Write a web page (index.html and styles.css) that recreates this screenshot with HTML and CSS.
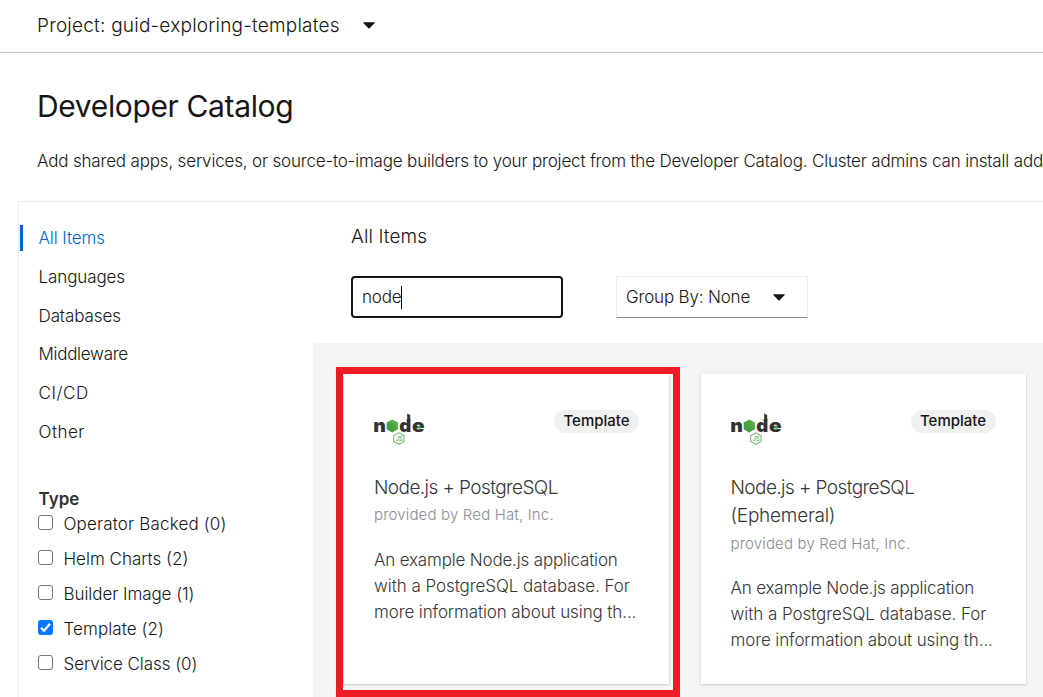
FILE: index.html
```html
<!DOCTYPE html>
<html lang="en">
<head>
<meta charset="utf-8">
<title>Developer Catalog</title>
<link rel="stylesheet" href="styles.css">
</head>
<body>
<svg class="defs" width="0" height="0">
  <defs>
    <linearGradient id="leaf" x1="0" y1="1" x2="1" y2="0"><stop offset="0" stop-color="#3b943a"/><stop offset="1" stop-color="#5cb54d"/></linearGradient>
    <symbol id="node-logo" viewBox="0 0 52 32">
      <text class="logo-letter" x="-.8" y="18.7" textLength="12.6" lengthAdjust="spacingAndGlyphs">n</text>
      <path d="M18.3 6.4l5.6 3.2v6.6l-5.6 3.2-5.6-3.2v-6.6z" fill="url(#leaf)"/>
      <text class="logo-letter" x="25.2" y="18.7" textLength="12" lengthAdjust="spacingAndGlyphs">d</text>
      <path d="M33.2 .4l3 1.7v6h-3z" fill="#333"/>
      <text class="logo-letter" x="37.9" y="18.7" textLength="12.6" lengthAdjust="spacingAndGlyphs">e</text>
      <path d="M45 12.3l1.6.9v1.8l-1.6.9-1.6-.9v-1.8z" fill="#4fa84a"/>
      <path d="M24.9 19.8l5.2 2.9v5.7l-5.2 2.9-5.2-2.9v-5.7z" fill="#fff" stroke="#77b871" stroke-width="1.1"/>
      <text class="logo-js" x="21.4" y="28.4">JS</text>
    </symbol>
  </defs>
</svg>
<header class="project-bar">
  <span class="project-name">Project: guid-exploring-templates</span>
  <svg class="caret" width="12" height="7" viewBox="0 0 12 7"><path d="M.3.3h11.4v.8L6.6 6.3q-.6.6-1.2 0L.3 1.1z"/></svg>
</header>
<section class="intro">
  <h1 class="page-title">Developer Catalog</h1>
  <p class="lead">Add shared apps, services, or source-to-image builders to your project from the Developer Catalog. Cluster admins can install add</p>
</section>
<main class="catalog">
  <aside class="sidebar">
    <nav class="tabs">
      <a class="tab active"><span class="t-all">All Items</span></a>
      <a class="tab"><span class="t-lang">Languages</span></a>
      <a class="tab"><span class="t-data">Databases</span></a>
      <a class="tab"><span class="t-mid">Middleware</span></a>
      <a class="tab"><span class="t-ci">CI/CD</span></a>
      <a class="tab"><span class="t-other">Other</span></a>
    </nav>
    <h2 class="filter-title">Type</h2>
    <div class="filters">
      <label class="filter"><span class="box"></span><span class="f-op">Operator Backed (0)</span></label>
      <label class="filter"><span class="box"></span><span class="f-helm">Helm Charts (2)</span></label>
      <label class="filter"><span class="box"></span><span class="f-build">Builder Image (1)</span></label>
      <label class="filter"><span class="box checked"><svg width="15" height="15" viewBox="0 0 15 15"><path d="M3 7.8l3 3 6-7" fill="none" stroke="#fff" stroke-width="2.2"/></svg></span><span class="f-temp">Template (2)</span></label>
      <label class="filter"><span class="box"></span><span class="f-svc">Service Class (0)</span></label>
    </div>
  </aside>
  <section class="content">
    <h2 class="content-title">All Items</h2>
    <div class="toolbar">
      <div class="search"><span class="search-text">node</span><span class="cursor"></span></div>
      <div class="group"><span class="group-text">Group By: None</span>
        <svg class="caret" width="12" height="7" viewBox="0 0 12 7"><path d="M.3.3h11.4v.8L6.6 6.3q-.6.6-1.2 0L.3 1.1z"/></svg></div>
    </div>
    <div class="grid">
      <article class="card highlighted">
        <div class="card-head"><svg class="logo" width="52" height="32"><use href="#node-logo"/></svg><span class="badge">Template</span></div>
        <h3 class="card-title"><span class="c-title">Node.js + PostgreSQL</span></h3>
        <p class="provider">provided by Red Hat, Inc.</p>
        <p class="desc"><span class="d1">An example Node.js application</span><br><span class="d2">with a PostgreSQL database. For</span><br><span class="d3">more information about using th...</span></p>
      </article>
      <article class="card">
        <div class="card-head"><svg class="logo" width="52" height="32"><use href="#node-logo"/></svg><span class="badge">Template</span></div>
        <h3 class="card-title"><span class="c-title">Node.js + PostgreSQL</span><br><span class="c-eph">(Ephemeral)</span></h3>
        <p class="provider">provided by Red Hat, Inc.</p>
        <p class="desc"><span class="d1">An example Node.js application</span><br><span class="d2">with a PostgreSQL database. For</span><br><span class="d3">more information about using th...</span></p>
      </article>
    </div>
  </section>
</main>
</body>
</html>
```
FILE: styles.css
```css
*, *::after { box-sizing: border-box; }
body { margin: 0; height: 697px; overflow: hidden; display: flex; flex-direction: column; background: #fff; color: #151515; font: 300 17px/26px Inter, "Liberation Sans", sans-serif; }
h1, h2, h3, p { margin: 0; font-weight: 300; }
span { white-space: nowrap; }
.defs { position: absolute; }
.project-bar { flex: none; display: flex; align-items: center; height: 53px; padding: 0 0 1px 37px; border-bottom: 1px solid #c7c7c7; }
.project-name { width: 326px; font-size: 19px; letter-spacing: .22px; }
.caret { fill: #151515; flex: none; }
.intro { flex: none; height: 148px; padding: 31px 0 0 37px; }
.page-title { font-size: 30px; line-height: 44px; font-weight: 400; letter-spacing: -.36px; }
.lead { margin-top: 20px; font-size: 17px; letter-spacing: -.175px; white-space: nowrap; }
.catalog { flex: 1; margin-left: 18px; display: flex; border: solid #ededed; border-width: 1px 0 0 1px; }
.sidebar { flex: none; width: 294px; padding: 23px 0 0 1px; }
.tabs { display: flex; flex-direction: column; gap: 12.8px; }
.tab { height: 26px; padding-left: 15.5px; border-left: 3px solid transparent; }
.active { color: #06c; border-left-color: #06c; }
.t-all, .t-lang, .t-data { letter-spacing: -.1px; }
.t-mid { letter-spacing: -.28px; }
.t-ci { letter-spacing: .6px; }
.t-other { letter-spacing: .5px; }
.filter-title { margin: 41px 0 0 18.5px; font-size: 17px; line-height: 26px; font-weight: 600; color: #333; }
.filters { padding-left: 18px; margin-top: -1px; }
.filter { display: flex; align-items: center; height: 35px; padding-bottom: 9px; }
.box { width: 15px; height: 15px; margin: -3px 10.5px 0 0; border: 1px solid #767676; border-radius: 3px; flex: none; }
.checked { background: #0075ff; border: 0; }
.checked svg { display: block; }
.f-op { letter-spacing: .16px; }
.f-build, .f-svc { letter-spacing: -.06px; }
.f-temp { letter-spacing: .08px; }
.content { flex: 1; min-width: 0; display: flex; flex-direction: column; }
.content-title { margin: 22px 0 0 38px; font-size: 19px; line-height: 26px; letter-spacing: .1px; }
.toolbar { display: flex; gap: 53px; margin: 26px 0 0 38px; }
.search { display: flex; align-items: center; width: 212px; height: 42px; padding-left: 9px; border: 2px solid #151515; border-radius: 4px; }
.search-text { letter-spacing: -.2px; }
.cursor { width: 1px; height: 23px; background: #000; }
.group { display: flex; align-items: center; width: 192px; height: 42px; padding-left: 9px; border: 1px solid #ededed; border-bottom-color: #8a8d90; }
.group-text { width: 147px; letter-spacing: -.17px; }
.grid { flex: 1; display: flex; gap: 31.5px; margin-top: 25px; padding: 31px 0 0 31px; background: #f4f4f4; }
.card { position: relative; flex: none; width: 325px; height: 310px; padding: 36px 30px 0; background: #fff; box-shadow: 0 1px 2px rgba(0,0,0,.15), 0 0 2px rgba(0,0,0,.08); color: #363636; }
.highlighted::after { content: ""; position: absolute; left: -8px; top: -7px; width: 344px; height: 330px; border: 7px solid #ed1c24; }
.card-head { display: flex; justify-content: space-between; align-items: flex-start; height: 63.5px; }
.logo { margin-top: 3px; }
.logo-letter { font: 900 18px Inter, sans-serif; fill: #333; }
.logo-js { font: 500 6px Inter, sans-serif; fill: #5ca456; }
.badge { width: 85px; height: 23px; border-radius: 12px; background: #f0f0f0; text-align: center; font-size: 15px; line-height: 22px; font-weight: 500; color: #151515; }
.card-title { font-size: 19px; line-height: 28.5px; }
.c-title { letter-spacing: -.58px; }
.c-eph { letter-spacing: -.25px; }
.provider { font-size: 15px; line-height: 26px; color: #8a8d90; letter-spacing: .16px; }
.desc { margin-top: 18.7px; }
.d1 { letter-spacing: -.18px; }
.d2 { letter-spacing: -.06px; }
.d3 { letter-spacing: -.11px; }
```
